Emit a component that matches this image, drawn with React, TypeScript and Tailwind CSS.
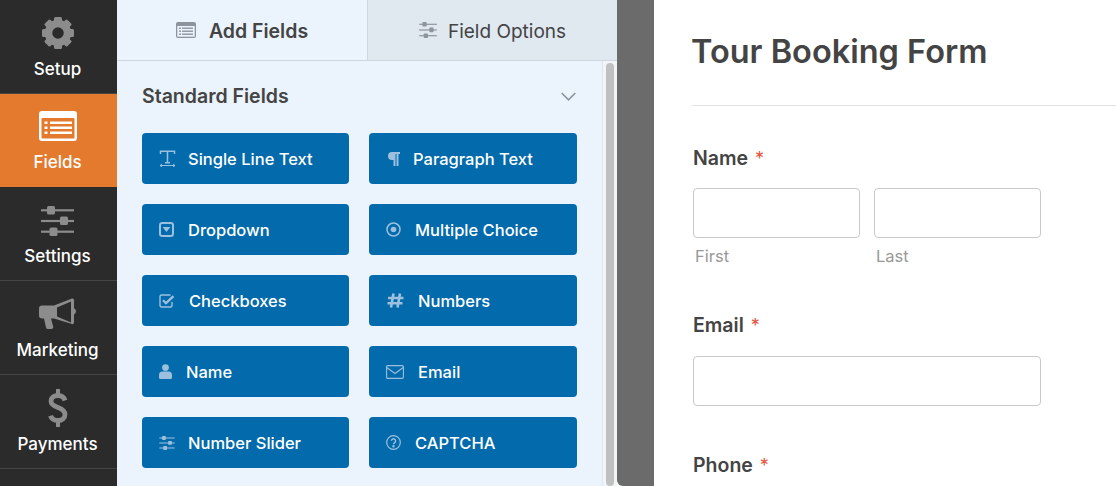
import React from "react";

const GRAY = "#8c8c8c";

const Gear = () => (
  <svg width="34" height="34" viewBox="0 0 34 34">
    <g fill={GRAY}>
      {[0, 45, 90, 135, 180, 225, 270, 315].map((a) => (
        <rect key={a} x="13" y="1" width="8" height="8" rx="1.5" transform={`rotate(${a} 17 17)`} />
      ))}
    </g>
    <circle cx="17" cy="17" r="9.5" fill="none" stroke={GRAY} strokeWidth="7.5" />
  </svg>
);

const FormIcon = ({ color = "#fff" }: { color?: string }) => (
  <svg width="38" height="30" viewBox="0 0 38 30">
    <rect x="0" y="0" width="38" height="30" rx="3" fill={color} />
    <rect x="2.5" y="7" width="33" height="20.5" rx="1" fill="#e37a2e" />
    <g fill={color}>
      <rect x="5.5" y="10.5" width="3" height="2.5" />
      <rect x="5.5" y="15.5" width="3" height="2.5" />
      <rect x="5.5" y="20.5" width="3" height="2.5" />
      <rect x="11" y="10.5" width="22" height="2.5" />
      <rect x="11" y="15.5" width="22" height="2.5" />
      <rect x="11" y="20.5" width="22" height="2.5" />
    </g>
  </svg>
);

const Sliders = ({ w, h, color }: { w: number; h: number; color: string }) => (
  <svg width={w} height={h} viewBox="0 0 33 30">
    <g fill={color}>
      <rect x="0" y="3.2" width="33" height="2.2" />
      <rect x="0" y="13.9" width="33" height="2.2" />
      <rect x="0" y="24.6" width="33" height="2.2" />
      <rect x="6" y="0" width="8" height="8.5" rx="1.5" />
      <rect x="19" y="10.5" width="8" height="8.5" rx="1.5" />
      <rect x="8.5" y="21.5" width="8" height="8.5" rx="1.5" />
    </g>
  </svg>
);

const Megaphone = () => (
  <svg width="38" height="32" viewBox="0 0 38 32">
    <path fill={GRAY} d="M0 10.5a3 3 0 0 1 3-3h12v13h-3l2.2 8a2 2 0 0 1-2 2.5H9a2 2 0 0 1-2-1.6L5 20.5H3a3 3 0 0 1-3-3z" />
    <path fill={GRAY} fillRule="evenodd" d="M15 7.5 33 0.5a1.6 1.6 0 0 1 2 1.5v8.2a3.4 3.4 0 0 1 0 6.2v8.2a1.6 1.6 0 0 1-2 1.5L15 20.5zM18 9.6v8.8l14 6.2V3.6z" />
  </svg>
);

const Dollar = () => (
  <svg width="20" height="38" viewBox="0 0 20 38" fill="none" stroke={GRAY}>
    <path d="M10 0v6M10 32v6" strokeWidth="4" />
    <path d="M17 11.5C16 8.2 13.5 6.5 10 6.5 5.6 6.5 3 9 3 12.2 3 15.6 6 17 10 18.5c4 1.5 7 3 7 7 0 3.6-3 6-7 6-4 0-6.6-2-7.5-4.8" strokeWidth="4.8" />
  </svg>
);

const items = [
  { label: "Setup", icon: <Gear />, h: "h-[94px]" },
  { label: "Fields", icon: <FormIcon />, h: "h-[94px]", active: true },
  { label: "Settings", icon: <Sliders w={33} h={30} color={GRAY} />, h: "h-[93px]", tight: true },
  { label: "Marketing", icon: <Megaphone />, h: "h-[94px]" },
  { label: "Payments", icon: <Dollar />, h: "h-[94px]" },
];

const ic = "#9cc0de";

const IconT = () => (
  <svg width="17" height="17" viewBox="0 0 17 17" fill="none" stroke={ic} strokeWidth="1.5">
    <path d="M1.5 4V1.2h14V4M8.5 1.2v11.5M6 12.7h5" />
    <path d="M1 15.5h15" strokeWidth="1" />
    <path d="M1 15.5l1.5-1.3v2.6zM16 15.5l-1.5-1.3v2.6z" fill={ic} strokeWidth="0.8" />
  </svg>
);
const IconPara = () => (
  <svg width="13" height="14" viewBox="0 0 13 14" fill={ic}>
    <path d="M5 0h8v2h-1.5v12H9.5V2H8.5v12H6.5V8H5A4 4 0 0 1 5 0z" />
  </svg>
);
const IconDropdown = () => (
  <svg width="15" height="15" viewBox="0 0 15 15">
    <rect x="1" y="1" width="13" height="13" rx="2.2" fill="none" stroke={ic} strokeWidth="2" />
    <path d="M3.6 5h7.8L7.5 10z" fill={ic} />
  </svg>
);
const IconRadio = () => (
  <svg width="15" height="15" viewBox="0 0 15 15">
    <circle cx="7.5" cy="7.5" r="6.5" fill="none" stroke={ic} strokeWidth="1.5" />
    <circle cx="7.5" cy="7.5" r="2.8" fill={ic} />
  </svg>
);
const IconCheck = () => (
  <svg width="16" height="14" viewBox="0 0 16 14" fill="none" stroke={ic}>
    <path d="M13 8v3.5a1.5 1.5 0 0 1-1.5 1.5h-9A1.5 1.5 0 0 1 1 11.5v-9A1.5 1.5 0 0 1 2.5 1h9" strokeWidth="1.4" />
    <path d="M4 6.2l3 3 7.5-7" strokeWidth="2.3" />
  </svg>
);
const IconHash = () => (
  <svg width="17" height="15" viewBox="0 0 17 15" fill="none" stroke={ic} strokeWidth="2.6">
    <path d="M6.5 0.5 4 14.5M13 0.5 10.5 14.5M1 5h15.5M0.5 10.3h15" />
  </svg>
);
const IconPerson = () => (
  <svg width="13" height="15" viewBox="0 0 13 15" fill={ic}>
    <circle cx="6.5" cy="3.6" r="3.4" />
    <path d="M3.5 7.5h6A3.5 3.5 0 0 1 13 11v2.5a1.5 1.5 0 0 1-1.5 1.5h-10A1.5 1.5 0 0 1 0 13.5V11a3.5 3.5 0 0 1 3.5-3.5z" />
  </svg>
);
const IconMail = () => (
  <svg width="18" height="14" viewBox="0 0 18 14" fill="none" stroke={ic} strokeWidth="1.1">
    <rect x="0.6" y="0.6" width="16.8" height="12.8" rx="1.2" />
    <path d="M0.8 2.5 9 8.5l8.2-6" />
  </svg>
);
const IconHelp = () => (
  <svg width="15" height="15" viewBox="0 0 15 15" fill="none" stroke={ic} strokeWidth="1.2">
    <circle cx="7.5" cy="7.5" r="6.8" />
    <path d="M5.4 5.8a2.1 2.1 0 1 1 3.3 1.8c-.8.5-1.2.9-1.2 1.7" strokeWidth="1.4" />
    <circle cx="7.5" cy="11.2" r="0.6" fill={ic} />
  </svg>
);

const fields: [string, React.ReactNode, string][] = [
  ["Single Line Text", <IconT />, "gap-[12px] pl-[17px]"],
  ["Paragraph Text", <IconPara />, "gap-[13px] pl-[18px]"],
  ["Dropdown", <IconDropdown />, "gap-[14px] pl-[17px]"],
  ["Multiple Choice", <IconRadio />, "gap-[14px] pl-[17px]"],
  ["Checkboxes", <IconCheck />, "gap-[14px] pl-[17px]"],
  ["Numbers", <IconHash />, "gap-[14px] pl-[18px]"],
  ["Name", <IconPerson />, "gap-[14px] pl-[17px]"],
  ["Email", <IconMail />, "gap-[14px] pl-[17px]"],
  ["Number Slider", <Sliders w={16} h={14} color={ic} />, "gap-[13px] pl-[17px]"],
  ["CAPTCHA", <IconHelp />, "gap-[14px] pl-[17px]"],
];

const Field = ({ label, cls = "" }: { label: string; cls?: string }) => (
  <div className={`ml-[1px] text-[19.5px] leading-[22px] font-semibold text-[#444] ${cls}`}>
    {label}
    <span className="ml-[7px] font-normal text-[#e2553d] text-[18px]">*</span>
  </div>
);

const Input = ({ w }: { w: string }) => (
  <div className={`${w} h-[50px] bg-white border border-[#c9c9c9] rounded-[4px]`} />
);

export default function App() {
  return (
    <div className="flex w-[1116px] h-[486px] overflow-hidden bg-white text-[#444]" style={{ fontFamily: "Inter, 'Liberation Sans', sans-serif" }}>
      <nav className="w-[117px] shrink-0 bg-[#2b2b2b] flex flex-col">
        {items.map((it) => (
          <div
            key={it.label}
            className={`${it.h} flex flex-col items-center pr-[2px] border-b ${it.active ? "bg-[#e37a2e] border-[#2b2b2b] pt-[15px]" : "border-[#454545] pt-[16px]"}`}
          >
            <div className="h-[34px] flex items-center justify-center">{it.icon}</div>
            <div className={`${it.tight ? "mt-[8px]" : "mt-[9px]"} text-[17px] leading-[20px] font-medium text-white`}>{it.label}</div>
          </div>
        ))}
      </nav>

      <div className="w-[500px] shrink-0 bg-[#ebf3fc] flex flex-col">
        <div className="h-[61px] shrink-0 flex border-b border-[#ced7e0]">
          <div className="w-[250px] flex items-center justify-center gap-[13px] text-[19.5px] font-semibold text-[#444]">
            <svg width="20" height="16" viewBox="0 0 20 16">
              <rect width="20" height="16" rx="2" fill="#8d949b" />
              <rect x="1.3" y="4" width="17.4" height="10.7" fill="#ebf3fc" />
              <g fill="#8d949b">
                <rect x="3" y="5.5" width="2" height="1.4" /><rect x="3" y="8.5" width="2" height="1.4" /><rect x="3" y="11.5" width="2" height="1.4" />
                <rect x="6" y="5.5" width="11" height="1.4" /><rect x="6" y="8.5" width="11" height="1.4" /><rect x="6" y="11.5" width="11" height="1.4" />
              </g>
            </svg>
            <span className="pt-[4px]">Add Fields</span>
          </div>
          <div className="w-[250px] flex items-center justify-center gap-[11px] bg-[#e0e8f0] border-l border-[#ced7e0] text-[19px] text-[#444]">
            <Sliders w={18} h={16} color="#8d949b" />
            <span className="pt-[4px]">Field Options</span>
          </div>
        </div>
        <div className="flex-1 flex min-h-0">
          <div className="w-[486px] pl-[25px] pr-[25px] border-r border-[#dfe6ee]">
            <div className="h-[72px] flex items-center justify-between">
              <span className="text-[19.5px] font-semibold text-[#444]">Standard Fields</span>
              <svg width="15" height="9" viewBox="0 0 15 9" fill="none" stroke="#8d949b" strokeWidth="1.6" className="mr-[1px] mb-[2px]">
                <path d="M0.7 1 7.5 7.8 14.3 1" />
              </svg>
            </div>
            <div className="grid grid-cols-[207px_208px] gap-x-[20px] gap-y-[20px]">
              {fields.map(([label, icon, c]) => (
                <div key={label} className={`h-[51px] flex items-center rounded-[4px] bg-[#036aab] text-white text-[16.5px] font-medium ${c}`}>
                  <span className="flex items-center shrink-0">{icon}</span>
                  <span className="pt-[2px]">{label}</span>
                </div>
              ))}
            </div>
          </div>
          <div className="flex-1 pl-[3px] pt-[2px] bg-[#f1f5fa]">
            <div className="h-full w-[8px] rounded-full bg-[#c0c0c0]" />
          </div>
        </div>
      </div>

      <div className="w-[37px] shrink-0 bg-[#6b6b6b] rounded-bl-[6px]" />

      <main className="flex-1 pl-[38px] min-w-0">
        <h1 className="pt-[31px] h-[106px] text-[32.5px] leading-[42px] font-semibold text-[#444] border-b border-[#e1e1e1]">
          <span className="block -ml-[1px]">Tour Booking Form</span>
        </h1>
        <Field label="Name" cls="mt-[41px]" />
        <div className="flex gap-[14px] mt-[18px] ml-[1px]">
          <Input w="w-[167px]" />
          <Input w="w-[167px]" />
        </div>
        <div className="flex ml-[3px] mt-[8px] text-[16.5px] leading-[20px] text-[#999]">
          <span className="w-[181px]">First</span>
          <span>Last</span>
        </div>
        <Field label="Email" cls="mt-[48px]" />
        <div className="mt-[19px] ml-[1px]">
          <Input w="w-[348px]" />
        </div>
        <Field label="Phone" cls="mt-[48px]" />
      </main>
    </div>
  );
}
